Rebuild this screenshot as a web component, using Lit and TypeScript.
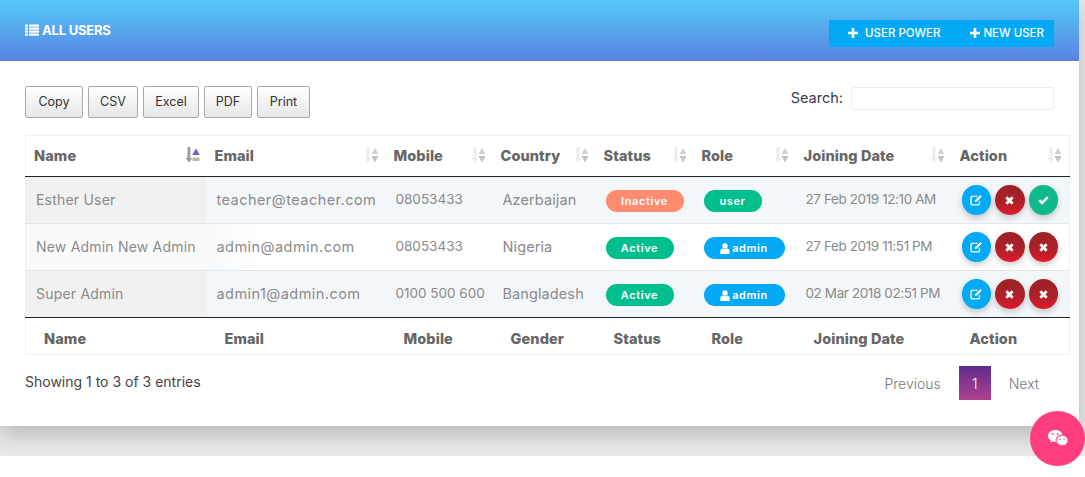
import { LitElement, html, css, svg } from 'lit';
import { customElement } from 'lit/decorators.js';

const listIcon = html`<svg width="14" height="12" viewBox="0 0 14 12" fill="#fff"><rect x="0" y="0.5" width="3" height="2.2"/><rect x="4" y="0.5" width="10" height="2.2"/><rect x="0" y="3.5" width="3" height="2.2"/><rect x="4" y="3.5" width="10" height="2.2"/><rect x="0" y="6.5" width="3" height="2.2"/><rect x="4" y="6.5" width="10" height="2.2"/><rect x="0" y="9.5" width="3" height="2.2"/><rect x="4" y="9.5" width="10" height="2.2"/></svg>`;
const plusIcon = html`<svg width="10" height="10" viewBox="0 0 10 10" fill="#fff"><path d="M3.7 0h2.6v3.7H10v2.6H6.3V10H3.7V6.3H0V3.7h3.7z"/></svg>`;
const userIcon = html`<svg width="10" height="11" viewBox="0 0 10 11" fill="#fff"><circle cx="5" cy="3" r="2.7"/><path d="M0.3 11V8.2C0.3 6.6 1.6 5.6 2.8 5.6c.6.4 1.3.6 2.2.6s1.6-.2 2.2-.6c1.2 0 2.5 1 2.5 2.6V11z"/></svg>`;
const editIcon = html`<svg width="13" height="12" viewBox="0 0 13 12" fill="none" stroke="#fff"><path d="M9.5 7v2.6c0 .8-.5 1.3-1.3 1.3H2.3C1.5 10.900 1 10.400 1 9.600V3.700c0-.8.500-1.300 1.300-1.300h5.200" stroke-width="1.300"/><path d="M5.200 6.200 10.400 1l1.500 1.500-5.200 5.200-1.900.4z" fill="#fff" stroke="none"/></svg>`;
const timesIcon = html`<svg width="9" height="9" viewBox="0 0 10 10" fill="#fff"><path d="M2.600.4 5 2.800 7.400.4l2.200 2.200L7.200 5l2.400 2.400-2.200 2.200L5 7.200 2.600 9.600.4 7.400 2.800 5 .4 2.600z"/></svg>`;
const checkIcon = html`<svg width="11" height="9" viewBox="0 0 12 10" fill="#fff"><path d="M4.400 9.600 .3 5.500l1.900-1.900 2.200 2.200L9.800.4l1.900 1.900z"/></svg>`;
const chatIcon = html`<svg width="20" height="17" viewBox="0 0 20 17" fill="#fff"><path d="M7.300 0C3.300 0 0 2.600 0 5.900c0 1.900 1.100 3.400 2.800 4.600l-.7 2.100 2.500-1.200c.9.200 1.700.3 2.700.3h.7c-.2-.5-.3-1-.3-1.600 0-3 2.700-5.400 6.100-5.400h.7C13.900 2.100 10.900 0 7.300 0z"/><path d="M20 10.400c0-2.800-2.700-5-5.800-5-3.300 0-5.900 2.200-5.900 5 0 2.700 2.600 5 5.900 5 .7 0 1.400-.2 2.100-.4l1.900 1.100-.5-1.800c1.300-1 2.300-2.400 2.300-3.900z" stroke="#ff3d7f" stroke-width=".7"/><g fill="#ff3d7f"><circle cx="4.800" cy="4" r=".9"/><circle cx="9.600" cy="4" r=".9"/><circle cx="12.200" cy="9.200" r=".7"/><circle cx="16.100" cy="9.200" r=".7"/></g></svg>`;

// same icon everywhere, only the first column is the active sort
const sortIcon = (active: boolean) => html`<svg class="sort" width="15" height="16" viewBox="0 0 15 16">
  ${active
    ? svg`<path d="M2.500 0h2.800v11h2.200L3.900 15.500 .6 11h1.900z" fill="#9c9c9c"/>
      <path d="M11 1.500 14.800 8h-7.600z" fill="#7c5cc4"/>
      <rect x="7.500" y="10.500" width="7" height="3.500" fill="#b9b9a8"/>`
    : svg`<path d="M2.500 0h2.800v11h2.200L3.900 15.500 .6 11h1.900z" fill="#ececec"/>
      <path d="M11 1 14.600 7.200h-7.200z" fill="#d2d2d2"/>
      <path d="M7.400 9h7.200L11 15.500z" fill="#c4c4c4"/>`}
</svg>`;

const users = [
  { name: 'Esther User', email: 'teacher@teacher.com', mobile: '08053433', country: 'Azerbaijan', active: false, role: 'user', date: '27 Feb 2019 12:10 AM' },
  { name: 'New Admin New Admin', email: 'admin@admin.com', mobile: '08053433', country: 'Nigeria', active: true, role: 'admin', date: '27 Feb 2019 11:51 PM' },
  { name: 'Super Admin', email: 'admin1@admin.com', mobile: '0100 500 600', country: 'Bangladesh', active: true, role: 'admin', date: '02 Mar 2018 02:51 PM' },
];

const headCols = ['Name', 'Email', 'Mobile', 'Country', 'Status', 'Role', 'Joining Date', 'Action'];
const footCols = ['Name', 'Email', 'Mobile', 'Gender', 'Status', 'Role', 'Joining Date', 'Action'];

@customElement('app-root')
export class AppRoot extends LitElement {
  static styles = css`
    :host {
      display: block;
      position: relative;
      height: 477px;
      overflow: hidden;
      background: #fff;
      font-family: Inter, "Open Sans", sans-serif;
    }
    .page {
      height: 456px;
      background: #e7e9eb;
    }
    .card {
      width: 1079px;
      height: 426px;
      background: #fff;
      box-shadow: 0 8px 22px rgba(0, 0, 0, 0.22);
    }
    .head {
      height: 61px;
      box-sizing: border-box;
      padding: 20px 25px 0 25px;
      display: flex;
      justify-content: space-between;
      align-items: flex-start;
      background: linear-gradient(to bottom, #55c9f9, #5a82e0);
      color: #fff;
    }
    .title {
      display: flex;
      align-items: center;
      gap: 3px;
      padding-top: 1px;
      font-size: 13px;
      font-weight: 700;
      line-height: 18px;
      letter-spacing: -0.2px;
    }
    .head-btns {
      display: flex;
      box-sizing: border-box;
      width: 225px;
      height: 27px;
      background: #03a9f4;
      font-size: 11.5px;
      font-weight: 500;
      align-items: center;
      padding: 0 0 2px 19px;
      gap: 30px;
    }
    .head-btns span {
      display: flex;
      align-items: center;
    }
    .head-btns .first svg { margin-right: 7px; }
    .head-btns .second svg { margin-right: 3px; }
    .body {
      padding: 25px 9px 0 25px;
    }
    .tools {
      display: flex;
      justify-content: space-between;
      align-items: flex-start;
      padding-right: 16px;
    }
    .dt-btns {
      display: flex;
      gap: 5px;
    }
    .dt-btns button {
      height: 32px;
      box-sizing: border-box;
      padding: 0 0 2px;
      border: 1px solid #a9a9a9;
      border-radius: 2px;
      background: linear-gradient(to bottom, #fff, #e6e6e6);
      font: 400 12.5px Inter, sans-serif;
      color: #333;
    }
    .b-copy { width: 58px; }
    .b-csv { width: 50px; }
    .b-excel { width: 56px; }
    .b-pdf { width: 48px; }
    .b-print { width: 53px; }
    .search {
      display: flex;
      align-items: center;
      gap: 8px;
      font-size: 14.5px;
      color: #3a3a4a;
      height: 24px;
    }
    .search span {
      margin-top: -2px;
    }
    .search div {
      width: 201px;
      height: 21px;
      border: 1px solid #eceef2;
      border-radius: 2px;
      background: #fff;
    }
    table {
      table-layout: fixed;
      border-collapse: collapse;
      width: 1045px;
      margin-top: 17px;
      border: 1px solid #eff0f2;
    }
    .c1 { width: 181px; }
    .c2 { width: 179px; }
    .c3 { width: 107px; }
    .c4 { width: 103px; }
    .c5 { width: 98px; }
    .c6 { width: 102px; }
    .c7 { width: 156px; }
    th {
      text-align: left;
      font-size: 14.5px;
      font-weight: 800;
      color: #666;
      letter-spacing: 0.1px;
    }
    thead th {
      height: 38px;
      padding: 0 7px 2px 8px;
      border-bottom: 1px solid #222;
    }
    thead th div {
      display: flex;
      justify-content: space-between;
      align-items: center;
    }
    .sort { flex: none; }
    tfoot th {
      height: 32px;
      padding: 4px 0 0 18px;
      border-top: 1px solid #222;
    }
    td {
      height: 44px;
      padding: 0 0 2px 10px;
      font-size: 14.5px;
      letter-spacing: 0.1px;
      color: #8a8a8a;
      white-space: nowrap;
      border-bottom: 1px solid #e4e6e9;
    }
    tbody tr:last-child td { border-bottom: none; }
    tbody tr:nth-child(odd) td { background: #f3f7fa; }
    tbody tr:nth-child(odd) td:first-child { background: #f1f1f1; }
    tbody tr:nth-child(even) td:first-child { background: #fafafa; }
    td:nth-child(2) { background: linear-gradient(to right, #f7f9fb, #fff 30%); }
    .t-name { font-size: 14px; letter-spacing: 0.2px; }
    .t-mail { letter-spacing: 0.45px; }
    .t-num { font-size: 13.5px; letter-spacing: 0; }
    .t-date { font-size: 13.5px; letter-spacing: -0.4px; }
    .pill {
      display: inline-flex;
      align-items: center;
      justify-content: center;
      gap: 2px;
      height: 22px;
      margin-top: 4px;
      border-radius: 11px;
      font-size: 11px;
      font-weight: 600;
      color: #fff;
      letter-spacing: 0.6px;
      vertical-align: middle;
    }
    .inactive { width: 78px; background: #ff8c6e; }
    .active { width: 68px; background: #00bf8f; }
    .user { width: 58px; background: #00bf8f; }
    .admin { width: 81px; background: #03a9f4; }
    .acts {
      display: flex;
      gap: 4px;
      margin-top: 2px;
    }
    .act {
      width: 29.5px;
      height: 30px;
      border-radius: 50%;
      display: flex;
      align-items: center;
      justify-content: center;
      box-shadow: 0 3px 6px rgba(0, 0, 0, 0.2);
    }
    .a-edit { background: #03a9f4; }
    .a-del { background: linear-gradient(to bottom, #992226 0%, #ad2029 55%, #e0192f 100%); }
    .a-ok { background: #0fb98a; }
    .bottom {
      display: flex;
      justify-content: space-between;
      align-items: center;
      padding: 11px 31px 0 0;
      font-size: 14px;
      color: #444;
    }
    .info {
      margin-top: -3px;
    }
    .pager {
      display: flex;
      align-items: center;
      color: #777;
      font-weight: 300;
      font-size: 14px;
    }
    .cur {
      width: 32px;
      height: 34px;
      margin: 0 18px;
      display: flex;
      align-items: center;
      justify-content: center;
      color: #fff;
      background: linear-gradient(to bottom, #5e2d8a, #b0418e);
    }
    .chat {
      position: absolute;
      left: 1030px;
      top: 411px;
      width: 55px;
      height: 55px;
      border-radius: 50%;
      background: #ff3d7f;
      display: flex;
      align-items: center;
      justify-content: center;
    }
  `;

  render() {
    return html`
      <div class="page">
        <div class="card">
          <div class="head">
            <div class="title">${listIcon} ALL USERS</div>
            <div class="head-btns">
              <span class="first">${plusIcon}USER POWER</span>
              <span class="second">${plusIcon}NEW USER</span>
            </div>
          </div>
          <div class="body">
            <div class="tools">
              <div class="dt-btns">
                <button class="b-copy">Copy</button>
                <button class="b-csv">CSV</button>
                <button class="b-excel">Excel</button>
                <button class="b-pdf">PDF</button>
                <button class="b-print">Print</button>
              </div>
              <label class="search"><span>Search:</span> <div></div></label>
            </div>
            <table>
              <colgroup>
                <col class="c1" /><col class="c2" /><col class="c3" /><col class="c4" />
                <col class="c5" /><col class="c6" /><col class="c7" /><col />
              </colgroup>
              <thead>
                <tr>
                  ${headCols.map((c, i) => html`<th><div>${c}${sortIcon(i === 0)}</div></th>`)}
                </tr>
              </thead>
              <tbody>
                ${users.map(u => html`
                  <tr>
                    <td class="t-name">${u.name}</td>
                    <td class="t-mail">${u.email}</td>
                    <td class="t-num">${u.mobile}</td>
                    <td>${u.country}</td>
                    <td><span class="pill ${u.active ? 'active' : 'inactive'}">${u.active ? 'Active' : 'Inactive'}</span></td>
                    <td>${u.role === 'admin'
                      ? html`<span class="pill admin">${userIcon}admin</span>`
                      : html`<span class="pill user">user</span>`}</td>
                    <td class="t-date">${u.date}</td>
                    <td>
                      <div class="acts">
                        <span class="act a-edit">${editIcon}</span>
                        <span class="act a-del">${timesIcon}</span>
                        ${u.active
                          ? html`<span class="act a-del">${timesIcon}</span>`
                          : html`<span class="act a-ok">${checkIcon}</span>`}
                      </div>
                    </td>
                  </tr>
                `)}
              </tbody>
              <tfoot>
                <tr>${footCols.map(c => html`<th>${c}</th>`)}</tr>
              </tfoot>
            </table>
            <div class="bottom">
              <div class="info">Showing 1 to 3 of 3 entries</div>
              <div class="pager">
                <span>Previous</span>
                <span class="cur">1</span>
                <span>Next</span>
              </div>
            </div>
          </div>
        </div>
      </div>
      <div class="chat">${chatIcon}</div>
    `;
  }
}
